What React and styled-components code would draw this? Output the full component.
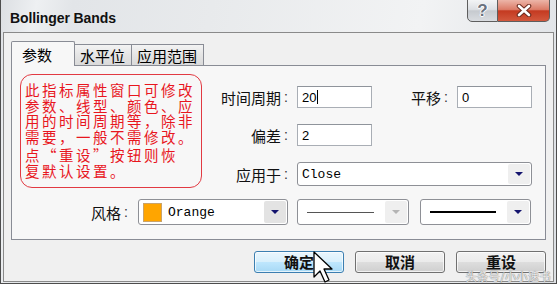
import React from "react";
import styled, { createGlobalStyle, css } from "styled-components";

const CJK = `"Noto Sans CJK SC", "Noto Sans", sans-serif`;
const SANS = `"Liberation Sans", Arial, sans-serif`;
const MONO = `"Liberation Mono", "Courier New", monospace`;

const GlobalStyle = createGlobalStyle`
  html, body { margin: 0; padding: 0; background: #e6e8eb; }
  body { width: 557px; height: 284px; overflow: hidden; }
  *, *::before, *::after { box-sizing: border-box; }
`;

const Window = styled.div`
  position: relative;
  width: 557px;
  height: 284px;
  display: flex;
  flex-direction: column;
  border: 1px solid #4d4d4d;
  border-top: none;
  padding: 0 2px 1px 2px;
  background: linear-gradient(100deg, #dcdfe3 0%, #eef0f2 6%, #e2e5e8 12%, #e8eaec 35%, #f2f3f4 70%, #dde0e4 100%);
`;

const TitleBar = styled.div`
  height: 32px;
  display: flex;
  align-items: flex-start;
  padding: 0 4px 0 7px;
`;

const Title = styled.div`
  flex: 1;
  margin-top: 10px;
  font-family: ${SANS};
  font-weight: bold;
  font-size: 14px;
  line-height: 16px;
  letter-spacing: -0.1px;
  color: #111;
`;

const CaptionButtons = styled.div`
  display: flex;
  margin-top: -1px;
`;

const CaptionButton = styled.div`
  height: 23px;
  display: flex;
  align-items: center;
  justify-content: center;
  border: 1px solid #5e5e5e;
  ${(p) =>
    p.$close
      ? css`
          width: 52px;
          border-left: none;
          border-radius: 0 0 5px 0;
          background: linear-gradient(#ecb5a8 0%, #dc7c68 45%, #c43a21 52%, #d2583d 100%);
        `
      : css`
          width: 31px;
          border-radius: 0 0 0 5px;
          background: linear-gradient(#f3f4f5 0%, #dcdfe3 45%, #c6cacf 52%, #d9dce0 100%);
        `}
`;

const HelpGlyph = styled.span`
  font-family: ${SANS};
  font-weight: bold;
  font-size: 17px;
  line-height: 17px;
  color: #6a727e;
  text-shadow: 0 0 1px #fff, 1px 0 0 #fff, -1px 0 0 #fff, 0 1px 0 #fff;
`;

const Client = styled.div`
  flex: 1;
  display: flex;
  flex-direction: column;
  background: #f0f0f0;
  border: 1px solid #8a8a8a;
  padding: 8px 7px 0 7px;
`;

const TabStrip = styled.div`
  display: flex;
  align-items: flex-end;
  height: 25px;
  margin-bottom: -1px;
  position: relative;
  z-index: 1;
`;

const Tab = styled.div`
  display: flex;
  align-items: center;
  font-family: ${CJK};
  font-size: 15px;
  color: #000;
  border: 1px solid #898c95;
  border-bottom: none;
  white-space: nowrap;
  ${(p) =>
    p.$active
      ? css`
          height: 25px;
          padding: 0 22px 0 10px;
          background: #f7f7f7;
          border-radius: 2px 2px 0 0;
        `
      : css`
          height: 21px;
          margin: 0 0 1px -1px;
          padding: 1px 6px 0 5px;
          background: linear-gradient(#f3f3f3, #e5e5e5 50%, #dadada);
        `}
`;

const Panel = styled.div`
  display: flex;
  flex-direction: column;
  border: 1px solid #898c95;
  background: #f7f7f7;
  padding: 8px 0 14px 8px;
`;

const TopArea = styled.div`
  display: flex;
  align-items: flex-start;
`;

const Note = styled.div`
  width: 182px;
  height: 114px;
  flex: none;
  border: 1.5px solid #e23a42;
  border-radius: 12px;
  padding: 7px 0 0 4px;
  color: #e8161e;
  font-family: ${CJK};
  font-size: 14.5px;
  line-height: 15.5px;
  letter-spacing: 2.5px;
`;

const NoteParagraph = styled.div`
  & + & {
    margin-top: 3px;
  }
`;

const NoteLine = styled.div`
  white-space: nowrap;
`;

const Form = styled.div`
  display: grid;
  grid-template-columns: 95px 75px 85px 75px;
  grid-template-rows: 22px 22px 24px;
  row-gap: 16px;
  padding-top: 12px;
`;

const Label = styled.div`
  display: flex;
  align-items: center;
  justify-content: flex-end;
  padding-right: 9px;
  font-family: ${CJK};
  font-size: 15px;
  color: #111;
  white-space: nowrap;
`;

const Colon = styled.span`
  font-family: ${SANS};
  font-size: 14px;
  margin-left: 3px;
  color: #333;
`;

const Field = styled.div`
  display: flex;
  align-items: center;
  padding-left: 4px;
  background: #fff;
  border: 1px solid #a9aeb5;
  border-top-color: #8f949b;
  font-family: ${SANS};
  font-size: 13px;
  color: #000;
`;

const Caret = styled.span`
  display: inline-block;
  width: 1px;
  height: 14px;
  margin-left: 1px;
  background: #000;
`;

const Select = styled.div`
  display: flex;
  align-items: stretch;
  background: #fff;
  border: 1px solid #8e9096;
  border-radius: 3px;
  ${(p) => p.$span && css`grid-column: ${p.$span};`}
  ${(p) => p.$width && css`width: ${p.$width}px;`}
  ${(p) => p.$ml && css`margin-left: ${p.$ml}px;`}
  height: ${(p) => p.$h ?? 26}px;
`;

const SelectValue = styled.div`
  flex: 1;
  display: flex;
  align-items: center;
  gap: 6px;
  padding: 0 4px;
  font-family: ${MONO};
  font-size: 13px;
  color: #000;
  min-width: 0;
`;

const Swatch = styled.span`
  width: 19px;
  height: 19px;
  flex: none;
  background: #ffa500;
  border: 1px solid #c9a36a;
`;

const LineSample = styled.span`
  flex: 1;
  margin: 0 6px 0 5px;
  height: ${(p) => p.$weight}px;
  background: ${(p) => p.$color};
`;

const DropButton = styled.div`
  width: 22px;
  margin: 1px;
  display: flex;
  align-items: center;
  justify-content: center;
  border-radius: 2px;
  background: ${(p) => (p.$dark ? "#e3e3e3" : "#efefef")};
`;

const Triangle = styled.span`
  width: 0;
  height: 0;
  border-left: 4px solid transparent;
  border-right: 4px solid transparent;
  border-top: 4px solid ${(p) => (p.$disabled ? "#b4b4b4" : "#14146e")};
`;

const StyleRow = styled.div`
  display: flex;
  align-items: center;
  margin-top: 11px;
`;

const StyleLabel = styled(Label)`
  width: 118px;
  height: 26px;
  padding-right: 10px;
`;

const ButtonRow = styled.div`
  display: flex;
  justify-content: flex-end;
  gap: 11px;
  margin-top: 11px;
`;

const DialogButton = styled.button`
  width: 90px;
  height: 22px;
  padding: 0;
  border: 1px solid #707070;
  border-radius: 3px;
  font-family: ${CJK};
  font-size: 15px;
  font-weight: bold;
  line-height: 18px;
  color: #111;
  background: linear-gradient(#f2f2f2 0%, #ebebeb 48%, #dddddd 52%, #cfcfcf 100%);
  box-shadow: inset 0 0 0 1px rgba(255, 255, 255, 0.7);
  ${(p) =>
    p.$hot &&
    css`
      border-color: #3c7fb1;
      background: linear-gradient(#eaf6fd 0%, #d9f0fc 48%, #bee6fd 52%, #a7d9f5 100%);
    `}
`;

const Pointer = styled.svg`
  position: absolute;
  left: 312px;
  top: 251px;
  pointer-events: none;
`;

const Watermark = styled.div`
  position: absolute;
  right: 5px;
  bottom: 1px;
  font-family: ${CJK};
  font-size: 11px;
  line-height: 12px;
  letter-spacing: 0.5px;
  color: rgba(255, 255, 255, 0.85);
  text-shadow: 0 0 1px #777, 0 0 1px #777;
  pointer-events: none;
`;

const noteParagraphs = [
  ["此指标属性窗口可修改", "参数、线型、颜色、应", "用的时间周期等，除非", "需要，一般不需修改。"],
  ["点“重设”按钮则恢", "复默认设置。"],
];

function CloseGlyph() {
  return (
    <svg width="16" height="13" viewBox="0 0 16 13">
      <path d="M3 2 L13 11 M13 2 L3 11" stroke="#6b2a1e" strokeWidth="4.6" strokeLinecap="round" />
      <path d="M3 2 L13 11 M13 2 L3 11" stroke="#fff" strokeWidth="2.6" strokeLinecap="round" />
    </svg>
  );
}

export default function App() {
  return (
    <>
      <GlobalStyle />
      <Window>
        <TitleBar>
          <Title>Bollinger Bands</Title>
          <CaptionButtons>
            <CaptionButton>
              <HelpGlyph>?</HelpGlyph>
            </CaptionButton>
            <CaptionButton $close>
              <CloseGlyph />
            </CaptionButton>
          </CaptionButtons>
        </TitleBar>
        <Client>
          <TabStrip>
            <Tab $active>参数</Tab>
            <Tab>水平位</Tab>
            <Tab>应用范围</Tab>
          </TabStrip>
          <Panel>
            <TopArea>
              <Note>
                {noteParagraphs.map((lines, i) => (
                  <NoteParagraph key={i}>
                    {lines.map((l) => (
                      <NoteLine key={l}>{l}</NoteLine>
                    ))}
                  </NoteParagraph>
                ))}
              </Note>
              <Form>
                <Label>
                  时间周期<Colon>:</Colon>
                </Label>
                <Field>
                  20
                  <Caret />
                </Field>
                <Label>
                  平移<Colon>:</Colon>
                </Label>
                <Field>0</Field>
                <Label>
                  偏差<Colon>:</Colon>
                </Label>
                <Field>2</Field>
                <span />
                <span />
                <Label>
                  应用于<Colon>:</Colon>
                </Label>
                <Select $span="2 / 5" $h={24}>
                  <SelectValue>Close</SelectValue>
                  <DropButton>
                    <Triangle />
                  </DropButton>
                </Select>
              </Form>
            </TopArea>
            <StyleRow>
              <StyleLabel>
                风格<Colon>:</Colon>
              </StyleLabel>
              <Select $width={150}>
                <SelectValue>
                  <Swatch />
                  Orange
                </SelectValue>
                <DropButton $dark>
                  <Triangle />
                </DropButton>
              </Select>
              <Select $width={112} $ml={9}>
                <SelectValue>
                  <LineSample $weight={1} $color="#555" />
                </SelectValue>
                <DropButton>
                  <Triangle $disabled />
                </DropButton>
              </Select>
              <Select $width={111} $ml={11}>
                <SelectValue>
                  <LineSample $weight={2} $color="#000" />
                </SelectValue>
                <DropButton>
                  <Triangle />
                </DropButton>
              </Select>
            </StyleRow>
          </Panel>
          <ButtonRow>
            <DialogButton $hot>确定</DialogButton>
            <DialogButton>取消</DialogButton>
            <DialogButton>重设</DialogButton>
          </ButtonRow>
        </Client>
        <Pointer width="22" height="34" viewBox="0 0 22 34">
          <path
            d="M1 1 L1 26 L7 20 L12 31 L16 29 L11 18 L19 18 Z"
            fill="#fff"
            stroke="#000"
            strokeWidth="1.3"
            strokeLinejoin="round"
          />
        </Pointer>
        <Watermark>头条号/小小速书</Watermark>
      </Window>
    </>
  );
}
